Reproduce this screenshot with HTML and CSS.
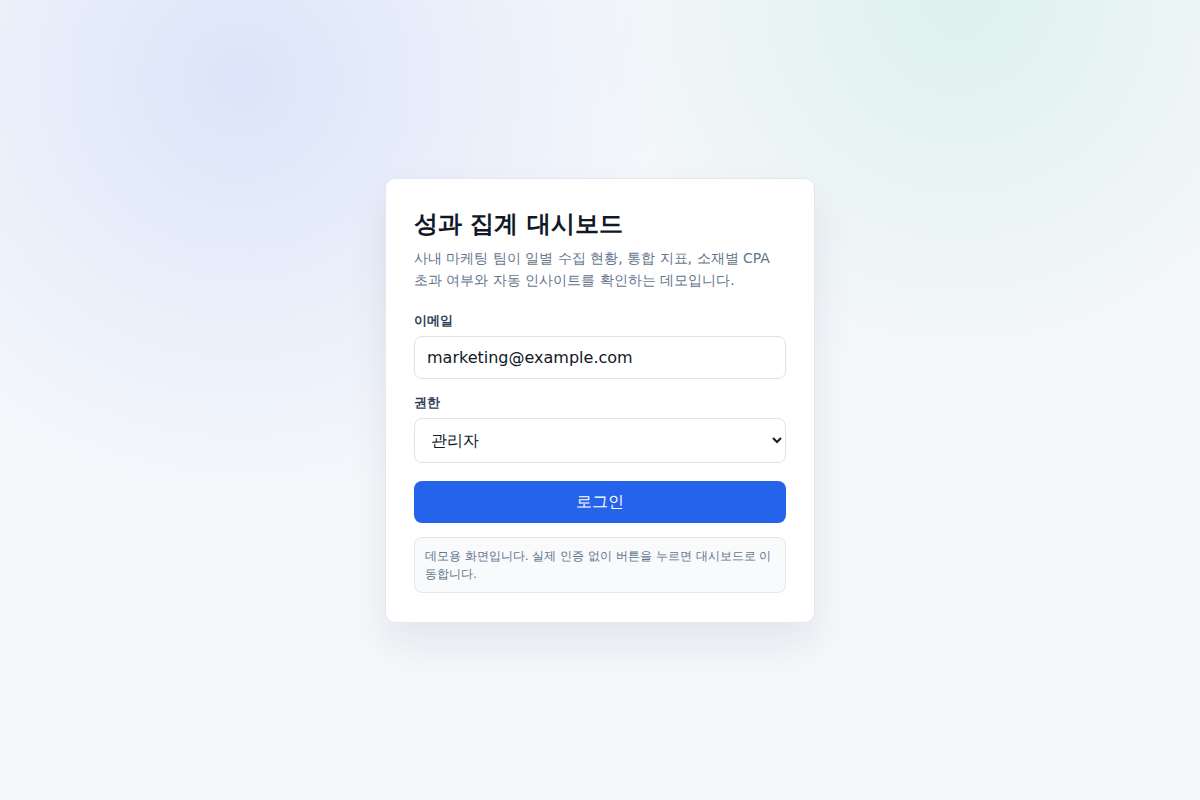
FILE: index.html
```html
<!DOCTYPE html>
<html lang="ko">
<head>
<meta charset="utf-8">
<title>성과 집계 대시보드</title>
<link rel="stylesheet" href="styles.css">
</head>
<body>
<main class="page">
  <form class="card" onsubmit="return false;">
    <h1 class="title">성과 집계 대시보드</h1>
    <p class="desc">사내 마케팅 팀이 일별 수집 현황, 통합 지표, 소재별 CPA 초과 여부와 자동 인사이트를 확인하는 데모입니다.</p>
    <label class="label" for="email">이메일</label>
    <input class="field" id="email" type="email" value="marketing@example.com">
    <label class="label" for="role">권한</label>
    <select class="field select" id="role">
      <option>관리자</option>
      <option>마케터</option>
    </select>
    <button class="btn" type="submit">로그인</button>
    <div class="note">데모용 화면입니다. 실제 인증 없이 버튼을 누르면 대시보드로 이동합니다.</div>
  </form>
</main>
</body>
</html>
```
FILE: styles.css
```css
* { box-sizing: border-box; }
html, body { margin: 0; padding: 0; }
body {
  font-family: "DejaVu Sans", sans-serif;
  color: #0f172a;
  background:
    radial-gradient(circle at 20% 10%, rgba(37, 99, 235, 0.12), transparent 35%),
    radial-gradient(circle at 80% 0%, rgba(16, 185, 129, 0.10), transparent 30%),
    #f5f7fb;
  min-height: 100vh;
}
.page {
  min-height: 100vh;
  display: grid;
  place-items: center;
  padding: 24px;
}
.card {
  width: 430px;
  background: #ffffff;
  border: 1px solid #e2e8f0;
  border-radius: 10px;
  box-shadow: 0 20px 40px rgba(15, 23, 42, 0.08);
  padding: 30px 28px 29px;
  display: flex;
  flex-direction: column;
}
.title {
  margin: 0 0 8px;
  font-size: 24px;
  line-height: 30px;
  font-weight: 700;
  color: #111827;
}
.desc {
  margin: 0 0 21px;
  font-size: 14px;
  line-height: 22px;
  color: #64748b;
}
.label {
  display: block;
  font-size: 13px;
  line-height: 18px;
  font-weight: 700;
  color: #334155;
  margin-bottom: 6px;
}
.field {
  display: block;
  font-family: inherit;
  font-size: 16px;
  line-height: 19px;
  color: #111827;
  background: #ffffff;
  border: 1px solid #dbe2ea;
  border-radius: 8px;
  padding: 11px 12px;
  margin: 0 0 15px;
  width: 100%;
}
.select {
  height: 45px;
  padding: 0 12px;
  margin-bottom: 18px;
}
.btn {
  font-family: inherit;
  font-size: 16px;
  line-height: 20px;
  color: #ffffff;
  background: #2563eb;
  border: none;
  border-radius: 8px;
  padding: 11px 12px;
  cursor: pointer;
}
.note {
  margin-top: 14px;
  font-size: 12px;
  line-height: 18px;
  color: #64748b;
  background: #f8fafc;
  border: 1px solid #e2e8f0;
  border-radius: 8px;
  padding: 9px 10px;
}
```
